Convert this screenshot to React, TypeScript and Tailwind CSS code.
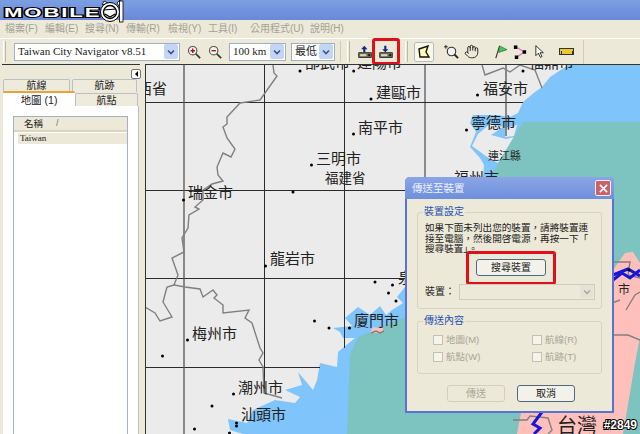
import React from 'react';
import { Hand } from 'lucide-react';

const cjk = "font-['Liberation_Sans','Noto_Sans_CJK_TC',sans-serif]";
const serif = "font-['Liberation_Serif','Noto_Sans_CJK_TC',serif]";

const menus = [
  { label: '檔案(F)', w: 'w-[40px]' },
  { label: '編輯(E)', w: 'w-[40px]' },
  { label: '搜尋(N)', w: 'w-[41px]' },
  { label: '傳輸(R)', w: 'w-[42px]' },
  { label: '檢視(Y)', w: 'w-[40px]' },
  { label: '工具(I)', w: 'w-[42px]' },
  { label: '公用程式(U)', w: 'w-[60px]' },
  { label: '說明(H)', w: 'w-[40px]' },
];

// page coordinates, the map starts at 145,64
const cities = [
  { name: '西省', x: 137, y: 81, size: 15 },
  { name: '邵武市', x: 305, y: 55, size: 15 },
  { name: '建陽市', x: 357, y: 55, size: 15 },
  { name: '建甌市', x: 376, y: 85, size: 15 },
  { name: '福安市', x: 483, y: 81, size: 15 },
  { name: '福鼎市', x: 529, y: 55, size: 15 },
  { name: '南平市', x: 358, y: 120, size: 15 },
  { name: '三明市', x: 316, y: 151, size: 15 },
  { name: '福建省', x: 325, y: 172, size: 13.5 },
  { name: '瑞金市', x: 188, y: 185, size: 15 },
  { name: '寧德市', x: 471, y: 115, size: 15 },
  { name: '連江縣', x: 488, y: 151, size: 11 },
  { name: '福州市', x: 454, y: 170, size: 15 },
  { name: '龍岩市', x: 270, y: 251, size: 15 },
  { name: '梅州市', x: 192, y: 326, size: 15 },
  { name: '廈門市', x: 354, y: 313, size: 15 },
  { name: '泉州市', x: 398, y: 270, size: 15 },
  { name: '潮州市', x: 238, y: 380, size: 15 },
  { name: '汕頭市', x: 241, y: 407, size: 15 },
  { name: '台灣', x: 557, y: 416, size: 20 },
  { name: '市', x: 618, y: 284, size: 12 },
];

const dots = [
  [300, 71], [353.7, 71], [371, 99], [477.5, 95], [523, 71], [353.5, 134], [311.5, 165], [293, 192],
  [183.5, 200], [466.5, 130], [265.5, 266], [187.5, 340], [349.5, 328], [233.5, 394], [236.5, 423],
  [236.5, 426], [375, 282], [392.5, 285], [388.5, 293], [396, 301], [314.5, 321], [329, 328],
  [162.5, 356], [212, 406], [194.5, 429], [229.5, 433], [629, 270],
];

const MapArt = () => (
  <svg viewBox="145 64 495 370" className="absolute inset-0 w-[495px] h-[370px]">
    <rect x="145" y="64" width="495" height="370" fill="#ebebeb" />
    {/* sea */}
    <polygon
      fill="#7fc4fb"
      points="570,64 550,77 542,87 535,92 523,102 518,113 510,117 497,115 485,115 473,115 470,123 476,132 470,147 480,158 484,165 483,177 460,215 430,250 405,287 397,297 403,303 392,310 386,315 380,306 370,315 358,307 345,318 352,326 333,328 340,332 343,338 355,338 338,352 337,367 320,363 317,380 313,390 298,372 302,385 285,390 300,397 295,403 275,400 253,410 247,423 228,419 230,430 243,434 640,434 640,64"
    />
    {/* land patches between the bays */}
    <polygon fill="#ebebeb" points="505,128 517,125 514,136 505,137" />
    <polygon fill="#ebebeb" points="478,134 490,124 503,127 491,135 506,139 515,137 510,145 498,163 490,159 472,146" />
    {/* sea zone */}
    <polygon fill="#7dc3bf" points="523,122 640,122 640,434 347,434 350,355 358,337 405,317 492,177 498,163" />
    {/* Taiwan */}
    <polygon
      fill="#ffc0bc"
      points="613,270 625,253 633,252 640,263 640,337 635,363 623,434 517,434 521,413 560,395 600,330"
    />
    <polygon fill="#ffc0bc" points="370,333 373,327 378,328 383,325 383,333" />
    {/* grid */}
    <g stroke="#2b2b2b" fill="none" strokeWidth="1">
      <path d="M145 102.5H523M145 190.5H440M145 278.5H410M145 367.5H320" />
      <path d="M264.5 64V394M344.5 64V348M425 64V190" />
    </g>
    <g stroke="#555" fill="none" strokeWidth="1.3">
      <path d="M184 64V434M506 64V136" />
    </g>
    {/* province borders */}
    <g stroke="#808080" fill="none" strokeWidth="1.4">
      <polyline points="273,65 274,73 277,76 265,93 260,100 240,103 227,117 227,124 223,127 227,138 235,149 231,157 223,153 217,167 218,175 223,181 212,184 203,190 203,200 195,207 199,209 189,215 188,228 182,238 184,252 172,258 178,275 174,285 185,287 200,289 203,297 213,290 217,295 214,298 223,305 223,313 249,310 245,318 252,323 260,348 263,353 259,360 263,367 264,393 282,398" />
      <polyline points="174,285 167,287 163,302 172,317 160,321 155,313 145,307" />
      <polyline points="482,65 485,75 503,68 510,72 520,65 535,70 542,88" />
      <polyline points="371,333 376,331 380,333 384,331" />
      <polyline points="613,262 630,262 628,275 640,278" />
      <polyline points="620,300 612,303 613,335 628,335 640,340" />
      <polyline points="626,310 635,295 640,292" />
      <polyline points="513,420 527,420 530,416 548,418 552,430 548,434" />
      <polyline points="570,405 590,405" />
    </g>
    {/* rivers */}
    <g stroke="#1616d8" fill="none" strokeWidth="3">
      <polyline points="613,280 622,273 630,278 640,270" />
      <polyline points="613,275 628,269 640,276" />
      <polyline points="542,412 533,424 540,428 534,434" />
    </g>
    {dots.map(([cx, cy]) => (
      <circle key={`${cx}-${cy}`} cx={cx} cy={cy} r="1.5" fill="#000" />
    ))}
  </svg>
);

const Combo = ({ text, className }: { text: string; className: string }) => (
  <div className={`flex h-[18px] items-center justify-between border border-[#9db2c9] bg-white pl-[3px] pr-px ${className}`}>
    <span className={`${serif} text-[11px] leading-none text-[#222] whitespace-nowrap`}>{text}</span>
    <span className="flex h-[15px] w-[14px] items-center justify-center rounded-[2px] bg-[#c4d4f3]">
      <svg viewBox="0 0 8 6" className="w-[8px] h-[6px]"><path d="M1 1.5 4 4.5 7 1.5" stroke="#39548f" strokeWidth="1.6" fill="none" /></svg>
    </span>
  </div>
);

const Zoomer = ({ plus }: { plus?: boolean }) => (
  <svg viewBox="0 0 16 16" className="w-[14px] h-[14px]">
    <circle cx="6.5" cy="6.5" r="4.8" fill="#f4f4f4" stroke="#555" strokeWidth="1.3" />
    <path d="M10 10 15 15" stroke="#333" strokeWidth="2" />
    <path d={plus ? 'M4 6.5H9M6.5 4V9' : 'M4 6.5H9'} stroke="#b01818" strokeWidth="1.6" />
  </svg>
);

const Device = ({ up }: { up?: boolean }) => (
  <svg viewBox="0 0 20 18" className="w-[14px] h-[14px]">
    <path d={up ? 'M9 0 4.5 5H7.5V9H10.5V5H13.5Z' : 'M7.5 0H10.5V5H13.5L9 9.5 4.5 5H7.5Z'} fill="#16238f" />
    <rect x="1" y="10" width="18" height="7" fill="#6b6b5c" stroke="#111" strokeWidth="1" />
    <rect x="3" y="12" width="9" height="3" fill="#d8d4b8" />
    <circle cx="16" cy="13.5" r="1.5" fill="#111" />
  </svg>
);

const Sep = ({ className }: { className: string }) => (
  <div className={`h-[21px] w-[3px] border-x border-l-white border-r-[#bdb9a4] ${className}`} />
);

const Tab = ({ text, className }: { text: string; className: string }) => (
  <div className={`flex items-center justify-center rounded-t-[2px] border border-b-0 border-[#b9c0c8] bg-[#eeebdc] text-[10px] leading-none text-[#222] ${className}`}>
    {text}
  </div>
);

const Check = ({ label }: { label: string }) => (
  <div className="flex h-[17px] items-center gap-[3px]">
    <span className="h-[10px] w-[10px] border border-[#c4c1b2] bg-[#f6f4ea]" />
    <span className="text-[9.5px] leading-none text-[#a8a698]">{label}</span>
  </div>
);

const Group = ({ title, className, children }: { title: string; className: string; children: React.ReactNode }) => (
  <div className={`relative rounded-[3px] border border-[#d6d3c2] ${className}`}>
    <span className="absolute left-[5px] top-[-6px] bg-[#ece9d8] px-px text-[10px] leading-none text-[#1f4fb0]">{title}</span>
    {children}
  </div>
);

const SendDialog = () => (
  <div className={`absolute left-[260px] top-[113px] flex h-[236px] w-[209px] flex-col rounded-t-[5px] border-2 border-t-0 border-[#5c72cf] bg-[#ece9d8] ${cjk}`}>
    <div className="mx-[-2px] flex h-[22px] shrink-0 items-center justify-between rounded-t-[5px] bg-gradient-to-b from-[#8aa5e6] to-[#6f8fdc] pl-[7px] pr-[3px]">
      <span className="text-[10.5px] leading-none text-[#eef2ff]">傳送至裝置</span>
      <span className="flex h-[16px] w-[16px] items-center justify-center rounded-[2px] border border-[#eee] bg-[#c9626a]">
        <svg viewBox="0 0 10 10" className="w-[9px] h-[9px]"><path d="M1 1 9 9M9 1 1 9" stroke="#fff" strokeWidth="1.8" /></svg>
      </span>
    </div>
    <div className="flex flex-1 flex-col px-[10px] pt-[13px]">
      <Group title="裝置設定" className="h-[97px] pl-[7px] pr-[6px] pt-[10px]">
        <p className="text-[9.6px] leading-[10.5px] whitespace-nowrap text-[#222]">
          如果下面未列出您的裝置，請將裝置連<br />接至電腦，然後開啓電源，再按一下「<br />搜尋裝置」。
        </p>
        <div className="ml-[41px] mt-[-4px] flex h-[34px] w-[90px] items-center justify-center rounded-[3px] border-[3px] border-[#e0101a]">
          <div className="flex h-[17px] w-[70px] items-center justify-center rounded-[3px] border border-[#4f6a80] bg-[#f3f2ea] text-[10px] leading-none text-[#222]">搜尋裝置</div>
        </div>
        <div className="mt-[-1px] flex items-center justify-between">
          <span className="text-[10px] leading-none text-[#222]">裝置：</span>
          <div className="flex h-[16px] w-[136px] items-center justify-end border border-[#cfccbc] bg-[#ece9d8] pr-px">
            <span className="flex h-[13px] w-[13px] items-center justify-center bg-[#e4e2d6]">
              <svg viewBox="0 0 8 6" className="w-[8px] h-[6px]"><path d="M1 1.5 4 4.5 7 1.5" stroke="#a9a89c" strokeWidth="1.5" fill="none" /></svg>
            </span>
          </div>
        </div>
      </Group>
      <Group title="傳送內容" className="mt-[12px] grid h-[53px] grid-cols-[99px_1fr] content-start pl-[15px] pt-[9px]">
        <Check label="地圖(M)" />
        <Check label="航線(R)" />
        <Check label="航點(W)" />
        <Check label="航跡(T)" />
      </Group>
      <div className="mt-[11px] flex justify-center gap-[12px] pl-[3px]">
        <div className="flex h-[17px] w-[58px] items-center justify-center rounded-[3px] border border-[#d2cfbf] text-[10px] leading-none text-[#a8a698]">傳送</div>
        <div className="flex h-[17px] w-[58px] items-center justify-center rounded-[3px] border border-[#4f6a80] bg-[#f3f2ea] text-[10px] leading-none text-[#222]">取消</div>
      </div>
    </div>
  </div>
);

const App = () => (
  <div className={`relative flex h-[434px] w-[640px] flex-col overflow-hidden bg-[#ece9d8] ${cjk}`}>
    {/* title bar */}
    <div className="relative h-[20px] shrink-0 bg-gradient-to-b from-[#7c9fe2] to-[#6a88d8]">
      <div className="flex h-full items-center pl-[4px] pt-[5px]">
        <span className="origin-left scale-x-[1.85] text-[12px] font-bold leading-none tracking-[1px] text-white [-webkit-text-stroke:2px_#000] [paint-order:stroke_fill] font-['Liberation_Sans',sans-serif]">MOBILE</span>
      </div>
      <svg viewBox="0 0 26 24" className="absolute left-[99px] top-0 w-[26px] h-[24px]">
        <path d="M3 5 5 1 9 3ZM18 3 21 0 21 8Z" fill="#fff" stroke="#000" strokeWidth="0.8" />
        <circle cx="11" cy="12" r="9.5" fill="#fff" stroke="#000" strokeWidth="1" />
        <circle cx="11" cy="12" r="6.5" fill="#fff" stroke="#000" strokeWidth="1.4" />
        <path d="M5 10 17 9M6 14 11 17 16 14" stroke="#000" strokeWidth="1.2" fill="none" />
        <rect x="20.5" y="1" width="3.5" height="21" fill="#fff" stroke="#000" strokeWidth="0.8" />
      </svg>
    </div>
    {/* menu bar */}
    <div className="flex h-[18px] shrink-0 items-center pl-[5px]">
      {menus.map((m) => (
        <span key={m.label} className={`${m.w} text-[10px] leading-none text-[#a3a196] whitespace-nowrap`}>{m.label}</span>
      ))}
    </div>
    {/* toolbar */}
    <div className="flex h-[26px] shrink-0 items-center border-t border-white pl-[3px]">
      <Sep className="mr-[8px]" />
      <Combo text="Taiwan City Navigator v8.51" className="w-[166px]" />
      <div className="ml-[7px] flex w-[35px] items-center justify-between">
        <Zoomer plus />
        <Zoomer />
      </div>
      <Combo text="100 km" className="ml-[7px] w-[57px]" />
      <Combo text="最低" className="ml-[5px] w-[44px]" />
      <div className="ml-[5px] h-[21px] w-px bg-[#cfcbb6]" />
      <Sep className="ml-[6px]" />
      <div className="ml-[8px] flex items-center">
        <Device up />
        <div className="flex h-[27px] w-[28px] items-center justify-center rounded-[3px] border-[3px] border-[#e0101a]">
          <Device />
        </div>
      </div>
      <Sep className="ml-[5px]" />
      <div className="ml-[6px] flex h-[20px] w-[20px] items-center justify-center rounded-[2px] border border-[#aebdd0] bg-[#fbf7e4]">
        <svg viewBox="0 0 14 14" className="w-[14px] h-[14px]"><path d="M2 4 11 1 9 7 12 12 3 12Z" fill="#fffbb0" stroke="#111" strokeWidth="1.4" /></svg>
      </div>
      <div className="ml-[10px] flex items-center gap-[5px]">
        <svg viewBox="0 0 16 16" className="w-[15px] h-[15px]">
          <circle cx="8" cy="8" r="4.5" fill="#f4f4f4" stroke="#333" strokeWidth="1.2" />
          <path d="M11 11 15 15" stroke="#222" strokeWidth="2" />
          <path d="M0 3H4M2 1V5" stroke="#222" strokeWidth="1" />
        </svg>
        <Hand size={15} strokeWidth={1.5} className="text-[#222]" />
      </div>
      <svg viewBox="0 0 16 16" className="ml-[14px] w-[15px] h-[15px]">
        <path d="M3 15 7 2" stroke="#333" strokeWidth="1.2" />
        <path d="M7 2 15 6 6 9Z" fill="#4cc35a" stroke="#1c6d2a" strokeWidth="0.7" />
      </svg>
      <svg viewBox="0 0 16 16" className="ml-[5px] w-[14px] h-[16px]">
        <path d="M3 2 13 8 4 14" stroke="#d86cc0" strokeWidth="1.2" fill="none" />
        <rect x="1" y="0.5" width="4" height="4" fill="#000" />
        <rect x="11" y="6" width="4" height="4" fill="#000" />
        <rect x="2" y="12" width="4" height="4" fill="#000" />
      </svg>
      <svg viewBox="0 0 12 16" className="ml-[8px] w-[10px] h-[15px]">
        <path d="M1 1V13L4 10 6.5 15 8.5 14 6 9.5H10Z" fill="#fff" stroke="#111" strokeWidth="1" />
      </svg>
      <div className="ml-[14px] flex h-[7px] w-[15px] items-end border border-[#333] bg-[#e8c930] pl-px">
        <span className="h-[3px] w-[12px] border-x border-[#333]" />
      </div>
      <div className="ml-[9px] h-[24px] w-px bg-[#cfcbb6]" />
    </div>
    {/* body */}
    <div className="flex min-h-0 flex-1">
      <div className="flex w-[145px] shrink-0 flex-col pl-[2px] pr-[5px]">
        <div className="flex h-[15px] shrink-0 items-end justify-end border-t border-[#333]">
          <span className="mr-[-1px] flex h-[10px] w-[10px] items-center justify-center rounded-[2px] border border-[#777] bg-white">
            <span className="h-0 w-0 border-y-[3px] border-r-[3px] border-y-transparent border-r-black" />
          </span>
        </div>
        <div className="relative flex-1">
          <div className="flex pl-px">
            <Tab text="航線" className="h-[13px] w-[67px]" />
            <Tab text="航跡" className="ml-[2px] h-[13px] w-[65px]" />
          </div>
          <div className="flex h-[15px] items-start pl-px">
            <div className="relative z-10 mt-[-1px] flex h-[16px] w-[72px] items-center justify-center rounded-t-[2px] border-t-2 border-[#e8a33a] bg-white text-[10.5px] leading-none text-[#222]">地圖 (1)</div>
            <Tab text="航點" className="mt-[1px] h-[14px] w-[63px]" />
          </div>
          <div className="absolute inset-x-px bottom-0 top-[27px] border-r border-[#b9c0c8] bg-white px-[10px] pt-[10px]">
            <div className="h-full border border-b-0 border-[#a3b2c2]">
              <div className="flex h-[15px] items-center gap-[13px] border-b-2 border-[#d9d5c0] bg-[#ece9d8] pl-[10px] text-[9.5px] leading-none text-[#222]">
                名稱<span className="text-[9px] text-[#777]">/</span>
              </div>
              <div className={`ml-[4px] mt-px flex h-[11px] items-center bg-[#ece9d8] pl-[2px] ${serif} text-[9px] leading-none text-[#222]`}>Taiwan</div>
            </div>
          </div>
        </div>
      </div>
      <div className="relative flex-1 overflow-hidden">
        <MapArt />
        {cities.map((c) => (
          <span
            key={c.name}
            className="absolute leading-none whitespace-nowrap text-[#222]"
            style={{ left: c.x - 145, top: c.y - 64, fontSize: c.size }}
          >
            {c.name}
          </span>
        ))}
        <div className="absolute left-0 top-0 h-px w-full bg-[#333]" />
        <div className="absolute left-0 top-0 h-full w-px bg-[#333]" />
        <SendDialog />
        <span className="absolute right-[3px] bottom-[3px] font-['Liberation_Sans',sans-serif] text-[12px] font-bold leading-none text-white [-webkit-text-stroke:2px_#000] [paint-order:stroke_fill]">#2849</span>
      </div>
    </div>
  </div>
);

export default App;
